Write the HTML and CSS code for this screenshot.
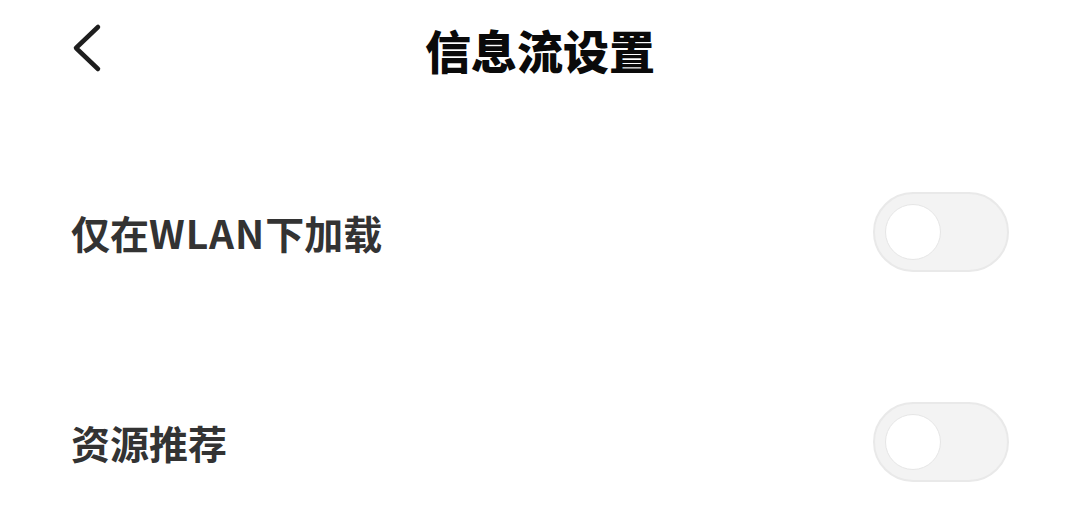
FILE: index.html
```html
<!DOCTYPE html>
<html lang="zh-CN">
<head>
<meta charset="utf-8">
<link rel="stylesheet" href="styles.css">
</head>
<body>
<div class="page">
  <header class="header">
    <div class="back">
      <svg width="40" height="56" viewBox="0 0 40 56">
        <path d="M29 7 L7 28 L29 49" fill="none" stroke="#1e1e1e" stroke-width="4.5" stroke-linecap="round" stroke-linejoin="round"/>
      </svg>
    </div>
    <h1 class="title">信息流设置</h1>
  </header>
  <main class="list">
    <div class="row">
      <span class="label">仅在<span class="latin">WLAN</span>下加载</span>
      <div class="switch"><div class="knob"></div></div>
    </div>
    <div class="row">
      <span class="label">资源推荐</span>
      <div class="switch"><div class="knob"></div></div>
    </div>
  </main>
</div>
</body>
</html>
```
FILE: styles.css
```css
html, body {
  margin: 0;
  padding: 0;
  background: #ffffff;
}
body {
  font-family: "Noto Sans CJK SC", "Noto Sans", sans-serif;
}
.page {
  width: 1080px;
  height: 527px;
  overflow: hidden;
}
.header {
  position: relative;
  height: 98px;
  display: flex;
  align-items: center;
  justify-content: center;
}
.back {
  position: absolute;
  left: 69px;
  top: 20px;
  width: 40px;
  height: 56px;
}
.back svg {
  display: block;
}
.title {
  margin: 0;
  font-size: 46px;
  font-weight: 900;
  color: #0a0a0a;
  line-height: 1;
}
.list {
  padding-top: 29px;
}
.row {
  height: 210px;
  display: flex;
  align-items: center;
  justify-content: space-between;
  padding: 0 71px 0 71px;
}
.label {
  font-size: 39px;
  font-weight: 700;
  color: #333333;
  line-height: 1;
}
.latin {
  letter-spacing: 1px;
}
.switch {
  box-sizing: border-box;
  width: 136px;
  height: 80px;
  border-radius: 40px;
  background: #f3f3f3;
  border: 2px solid #e9e9e9;
  display: flex;
  align-items: center;
  padding-left: 10px;
}
.knob {
  box-sizing: border-box;
  width: 56px;
  height: 56px;
  border-radius: 50%;
  background: #ffffff;
  border: 1.5px solid #e6e6e6;
}
```
